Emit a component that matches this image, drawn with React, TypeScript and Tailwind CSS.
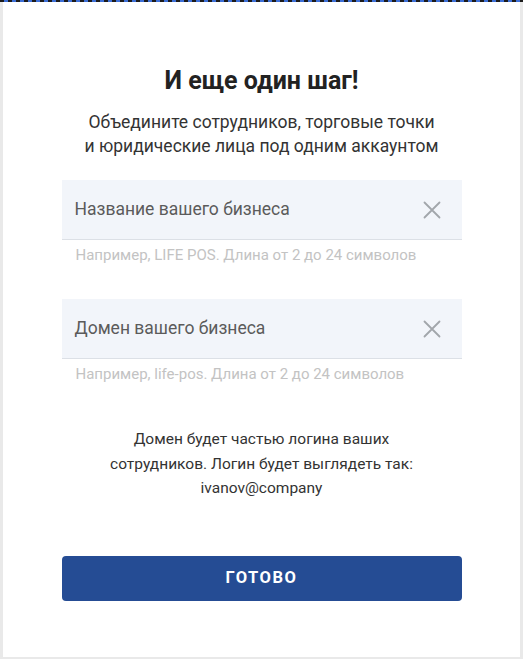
function Field({ label, hint }: { label: string; hint: string }) {
  return (
    <div>
      <div className="h-[60px] bg-[#f2f5fa] border-b border-[#dce0e6] flex items-center justify-between pl-[13px] pr-[21px]">
        <span className="text-[17.5px] text-[#5b5b5b]">{label}</span>
        <svg width="18" height="18" viewBox="0 0 18 18" className="text-[#a2a6ab]">
          <path d="M1.5 1.5 16.5 16.5M16.5 1.5 1.5 16.5" stroke="currentColor" strokeWidth="1.8" strokeLinecap="round" />
        </svg>
      </div>
      <p className="mt-[7px] pl-[14px] text-[15px] leading-4 text-[#c3c3c3]">{hint}</p>
    </div>
  )
}

export default function App() {
  return (
    <div
      className="w-[523px] h-[659px] bg-[#e9e9e9] flex flex-col overflow-hidden"
      style={{ fontFamily: 'Roboto, "Noto Sans", sans-serif' }}
    >
      <div className="h-[2px] shrink-0 bg-[repeating-linear-gradient(90deg,#1b1b1b_0_4px,#3d6fd6_4px_8px)]" />
      <div className="mx-[3px] h-[655px] bg-white flex flex-col items-center pt-[65px]">
        <h1 className="text-[25px] leading-7 font-bold text-[#222]">И еще один шаг!</h1>
        <p className="mt-[15px] text-center text-[17.5px] leading-6 text-[#333]">
          Объедините сотрудников, торговые точки
          <br />
          и юридические лица под одним аккаунтом
        </p>
        <div className="w-[400px] mt-[22px] flex flex-col gap-[36px]">
          <Field label="Название вашего бизнеса" hint="Например, LIFE POS. Длина от 2 до 24 символов" />
          <Field label="Домен вашего бизнеса" hint="Например, life-pos. Длина от 2 до 24 символов" />
        </div>
        <p className="mt-[45px] text-center text-[15.5px] leading-[24.5px] text-[#333]">
          Домен будет частью логина ваших
          <br />
          сотрудников. Логин будет выглядеть так:
          <br />
          ivanov@company
        </p>
        <button className="mt-[55px] w-[400px] h-[45px] rounded bg-[#254c94] text-white text-[16.5px] font-bold tracking-[1.5px]">
          ГОТОВО
        </button>
      </div>
    </div>
  )
}
